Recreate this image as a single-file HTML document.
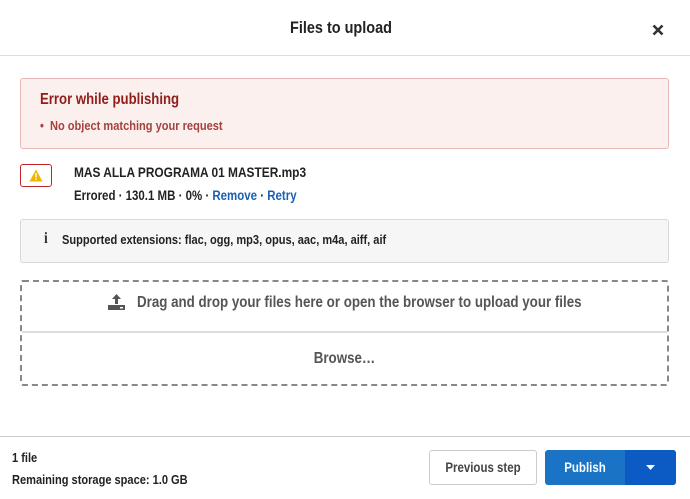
<!DOCTYPE html>
<html><head><meta charset="utf-8"><style>
*{box-sizing:border-box;margin:0;padding:0}
body{width:690px;height:499px;background:#fff;font-family:"Liberation Sans",sans-serif;font-weight:bold;color:#222;position:relative;overflow:hidden}
.a{position:absolute;white-space:nowrap;transform:scaleX(.85);transform-origin:left center}
.b{position:absolute}
.c{transform-origin:center center}
</style></head><body>
<div class="b" style="left:0;top:0;width:690px;height:56px;border-bottom:1px solid #ddd"></div>
<div class="a c" style="left:-4px;top:18px;width:690px;text-align:center;font-size:17px;color:#222">Files to upload</div>
<svg class="b" style="left:652px;top:24px" width="12" height="12" viewBox="0 0 12 12"><path d="M1.5 1.5L10.5 10.5M10.5 1.5L1.5 10.5" stroke="#333" stroke-width="2.6"/></svg>

<div class="b" style="left:20px;top:78px;width:649px;height:71px;background:#fcf0ef;border:1px solid #e6b8b5;border-radius:3px"></div>
<div class="a" style="left:40px;top:91px;font-size:15.5px;color:#8f1e1a">Error while publishing</div>
<div class="a" style="left:40px;top:118px;font-size:13px;color:#a6413c">•&nbsp; No object matching your request</div>

<div class="b" style="left:20px;top:164px;width:32px;height:23px;border:1px solid #c0262a;border-radius:3px"></div>
<svg class="b" style="left:29px;top:169px" width="14" height="13" viewBox="0 0 14 13"><path d="M7 0.5L13.5 12.5H0.5Z" fill="#f0b400"/><rect x="6.3" y="4" width="1.4" height="4.5" fill="#fff"/><rect x="6.3" y="9.5" width="1.4" height="1.4" fill="#fff"/></svg>
<div class="a" style="left:74px;top:164px;font-size:14px;color:#222">MAS ALLA PROGRAMA 01 MASTER.mp3</div>
<div class="a" style="left:74px;top:188px;font-size:13.5px;color:#222">Errored · 130.1 MB · 0% · <span style="color:#1a5fb4">Remove</span> · <span style="color:#1a5fb4">Retry</span></div>

<div class="b" style="left:20px;top:219px;width:649px;height:44px;background:#f6f6f6;border:1px solid #d8d8d8;border-radius:3px"></div>
<div class="a" style="left:44px;top:230px;font-size:16px;font-family:'Liberation Serif',serif;color:#333">i</div>
<div class="a" style="left:62px;top:232px;font-size:13px;color:#222">Supported extensions: flac, ogg, mp3, opus, aac, m4a, aiff, aif</div>

<div class="b" style="left:20px;top:280px;width:649px;height:106px;border:2px dashed #888;border-radius:3px"></div>
<div class="b" style="left:22px;top:331px;width:645px;height:2px;background:#ddd"></div>
<svg class="b" style="left:108px;top:294px" width="17" height="16" viewBox="0 0 17 16"><path d="M8.5 0L13 5H10V10H7V5H4Z" fill="#555"/><rect x="0" y="11" width="17" height="5" fill="#555"/><rect x="12" y="13" width="3" height="1.5" fill="#fff"/></svg>
<div class="a" style="left:137px;top:294px;font-size:15.7px;color:#555">Drag and drop your files here or open the browser to upload your files</div>
<div class="a c" style="left:20px;top:350px;width:649px;text-align:center;font-size:15.7px;color:#555">Browse…</div>

<div class="b" style="left:0;top:436px;width:690px;height:63px;border-top:1px solid #ccc"></div>
<div class="a" style="left:12px;top:450px;font-size:13px;color:#222">1 file</div>
<div class="a" style="left:12px;top:472px;font-size:13px;color:#222">Remaining storage space: 1.0 GB</div>
<div class="b" style="left:429px;top:450px;width:108px;height:35px;border:1px solid #ccc;border-radius:3px"></div>
<div class="a c" style="left:429px;top:450px;width:108px;text-align:center;line-height:35px;font-size:13.5px;color:#444">Previous step</div>
<div class="b" style="left:545px;top:450px;width:131px;height:35px;background:#1a73c5;border-radius:3px"></div>
<div class="b" style="left:625px;top:450px;width:51px;height:35px;background:#0c5ac4;border-radius:0 3px 3px 0"></div>
<div class="a c" style="left:545px;top:450px;width:80px;text-align:center;line-height:35px;font-size:13.5px;color:#fff">Publish</div>
<svg class="b" style="left:646px;top:465px" width="9" height="5" viewBox="0 0 9 5"><path d="M0 0H9L4.5 5Z" fill="#fff"/></svg>
</body></html>
